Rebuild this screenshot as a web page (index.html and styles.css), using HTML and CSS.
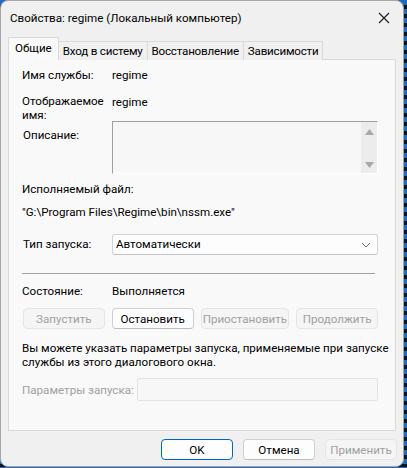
FILE: index.html
```html
<!DOCTYPE html>
<html lang="ru">
<head>
  <meta charset="UTF-8" />
  <title>Свойства: regime (Локальный компьютер)</title>
  <link rel="stylesheet" href="styles.css">
</head>
<body>
  <div class="window">
    <div class="titlebar">
      <span class="title">Свойства: regime (Локальный компьютер)</span>
      <svg class="close" width="12" height="12" viewBox="0 0 12 12">
        <path d="M1 1L11 11M11 1L1 11" stroke="#1a1a1a" stroke-width="1.1" fill="none"/>
      </svg>
    </div>

    <div class="tabs">
      <div class="tab active">Общие</div>
      <div class="tab">Вход в систему</div>
      <div class="tab">Восстановление</div>
      <div class="tab">Зависимости</div>
    </div>

    <div class="panel">
      <div class="field row-name">
        <span>Имя службы:</span>
        <span>regime</span>
      </div>

      <div class="field row-display">
        <span class="two-line">Отображаемое имя:</span>
        <span class="value-top">regime</span>
      </div>

      <div class="field row-desc">
        <span class="desc-label">Описание:</span>
        <div class="desc-box">
          <div class="scrollbar">
            <svg width="9" height="6" viewBox="0 0 9 6"><path d="M0 6L4.5 0L9 6Z" fill="#a8a8a8"/></svg>
            <svg width="9" height="6" viewBox="0 0 9 6"><path d="M0 0L4.5 6L9 0Z" fill="#a8a8a8"/></svg>
          </div>
        </div>
      </div>

      <div class="line exe-label">Исполняемый файл:</div>
      <div class="line exe-path">"G:\Program Files\Regime\bin\nssm.exe"</div>

      <div class="field row-start">
        <span>Тип запуска:</span>
        <div class="select">
          <span>Автоматически</span>
          <svg width="10" height="6" viewBox="0 0 10 6"><path d="M1 1L5 5L9 1" stroke="#707070" stroke-width="1" fill="none"/></svg>
        </div>
      </div>

      <div class="separator"></div>

      <div class="field row-state">
        <span>Состояние:</span>
        <span>Выполняется</span>
      </div>

      <div class="actions">
        <button class="btn" disabled>Запустить</button>
        <button class="btn">Остановить</button>
        <button class="btn wide" disabled>Приостановить</button>
        <button class="btn" disabled>Продолжить</button>
      </div>

      <p class="hint">Вы можете указать параметры запуска, применяемые при запуске<br>службы из этого диалогового окна.</p>

      <div class="params">
        <span class="disabled-text">Параметры запуска:</span>
        <div class="params-input"></div>
      </div>
    </div>

    <div class="footer">
      <button class="btn dlg default">OK</button>
      <button class="btn dlg">Отмена</button>
      <button class="btn dlg" disabled>Применить</button>
    </div>
  </div>
</body>
</html>
```

FILE: styles.css
```css
body {
  margin: 0;
  font-family: Roboto, sans-serif;
  font-size: 11.6px;
  color: #000;
  background: repeating-linear-gradient(180deg, #1d6cc0 0 5px, #0f151d 5px 9px);
}

.window {
  width: 402px;
  height: 465px;
  border: 1px solid #a6a6a6;
  border-radius: 8px;
  background: #f0f0f0;
  display: flex;
  flex-direction: column;
  overflow: hidden;
}

.titlebar {
  height: 33px;
  padding: 0 12px 0 9px;
  display: flex;
  align-items: center;
  justify-content: space-between;
}

.close {
  margin-right: 1px;
}

/* tab strip */
.tabs {
  margin: 4px 0 -1px 7px;
  height: 22px;
  display: flex;
  align-items: flex-end;
  position: relative;
  z-index: 1;
}

.tab {
  height: 18px;
  line-height: 18px;
  padding: 0 4px;
  letter-spacing: -0.2px;
  border: 1px solid #d9d9d9;
  border-bottom: none;
  background: #f0f0f0;
  margin-left: -1px;
}

.tab:first-child {
  margin-left: 0;
}

.tab.active {
  height: 22px;
  line-height: 20px;
  padding: 0 6px;
  letter-spacing: 0;
  background: #f9f9f9;
  z-index: 1;
  position: relative;
}

.panel {
  box-sizing: border-box;
  margin: 0 7px;
  height: 372px;
  border: 1px solid #d9d9d9;
  background: #f9f9f9;
  padding: 8px 17px 0 13px;
}

.field {
  display: grid;
  grid-template-columns: 90px 1fr;
  line-height: 15px;
}

.row-display {
  margin-top: 11px;
  line-height: 14px;
}

.two-line {
  width: 80px;
}

.value-top {
  padding-top: 1px;
}

.row-desc {
  margin-top: -1px;
  padding-left: 1px;
}

.desc-label {
  padding-top: 7px;
}

.desc-box {
  margin-left: -1px;
  height: 51px;
  border-top: 1px solid #a0a0a0;
  border-left: 1px solid #a0a0a0;
  border-right: 1px solid #fff;
  border-bottom: 1px solid #fff;
  background: #f7f7f7;
  display: flex;
  justify-content: flex-end;
}

.scrollbar {
  width: 16px;
  background: #ececec;
  display: flex;
  flex-direction: column;
  align-items: center;
  justify-content: space-between;
  padding: 7px 0 5px;
}

.line {
  line-height: 15px;
}

.exe-label {
  margin-top: 8px;
}

.exe-path {
  margin-top: 8px;
}

.row-start {
  margin-top: 14px;
  align-items: center;
  padding-left: 1px;
}

.select {
  margin-left: -1px;
  height: 19px;
  border: 1px solid #d3d3d3;
  border-bottom-color: #c3c3c3;
  border-radius: 3px;
  background: #fdfdfd;
  display: flex;
  align-items: center;
  justify-content: space-between;
  padding: 0 6px 0 3px;
}

.separator {
  margin: 18px 3px 0 0;
  height: 1px;
  background: #a0a0a0;
}

.row-state {
  margin-top: 10px;
}

.actions {
  margin-top: 9px;
  padding-left: 1px;
  display: flex;
  gap: 7px;
}

.btn {
  font: inherit;
  color: #000;
  width: 82px;
  height: 21px;
  padding: 0;
  border: 1px solid #d0d0d0;
  border-bottom-color: #bdbdbd;
  border-radius: 4px;
  background: #fdfdfd;
}

.btn.wide {
  width: 89px;
}

.btn:disabled {
  color: #a0a0a0;
  background: #f5f5f5;
  border-color: #e5e5e5;
}

.hint {
  margin: 12px -10px 0 0;
  line-height: 14px;
  white-space: nowrap;
}

.params {
  margin-top: 9px;
  display: flex;
  align-items: center;
  gap: 3px;
}

.disabled-text {
  color: #a0a0a0;
}

.params-input {
  flex: 1;
  height: 21px;
  border: 1px solid #e3e3e3;
  border-radius: 2px;
  background: #f7f7f7;
}

.footer {
  padding: 8px 6px 0 0;
  display: flex;
  justify-content: flex-end;
  gap: 10px;
}

.btn.dlg {
  width: 72px;
}

.btn.default {
  border: 1px solid #0067c0;
}
```
